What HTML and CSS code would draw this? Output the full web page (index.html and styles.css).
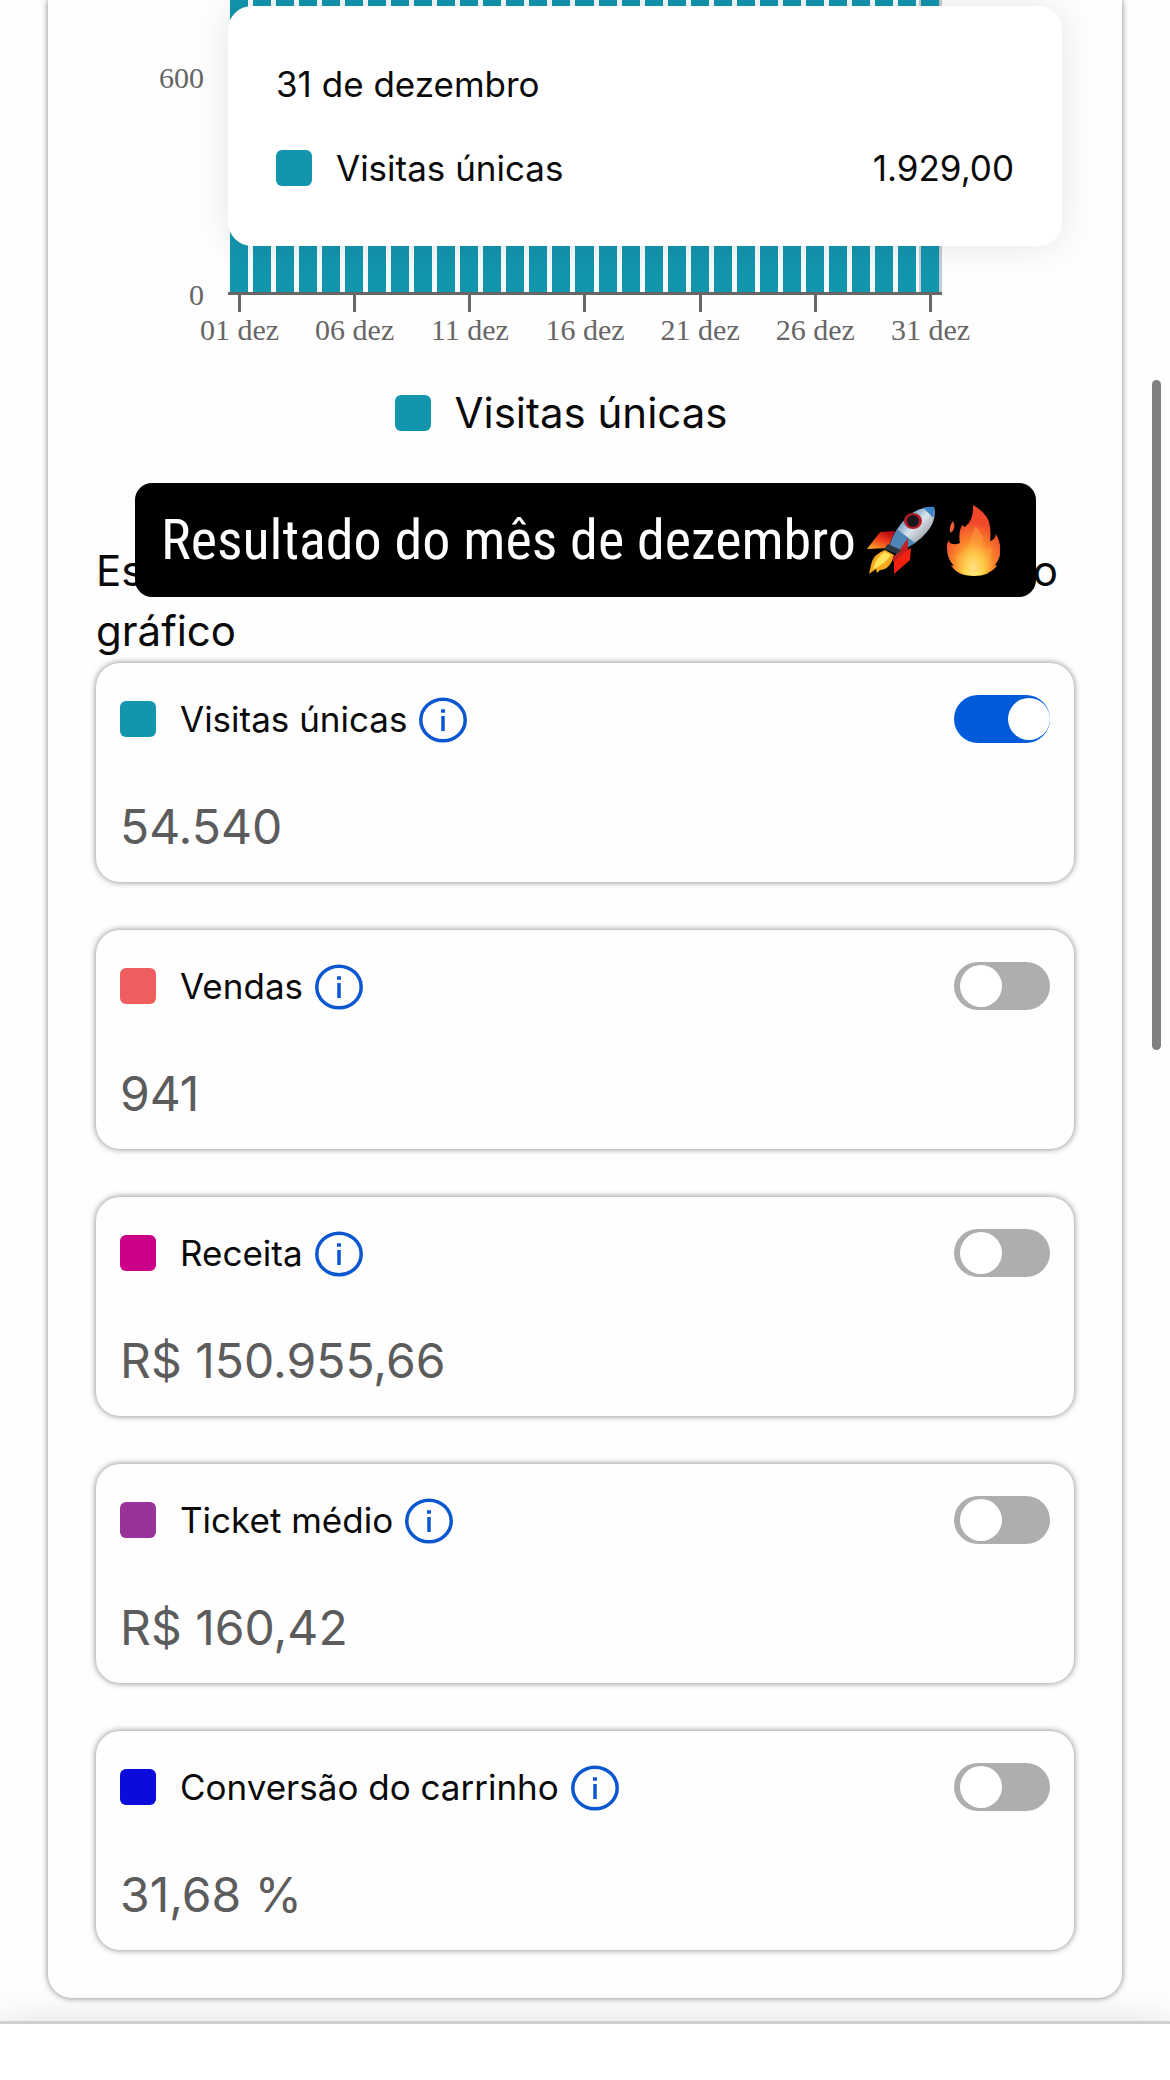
FILE: index.html
```html
<!DOCTYPE html>
<html lang="pt-BR">
<head>
  <meta charset="UTF-8" />
  <title>Estatísticas</title>
  <meta name="viewport" content="width=device-width, initial-scale=1.0" />
  <link rel="stylesheet" href="styles.css">
</head>
<body>
  <main class="painel">
    <div class="grafico">
      <div class="eixo-y">
        <span>600</span>
        <span>0</span>
      </div>
      <div class="area">
        <div class="barras" id="barras"></div>
        <div class="eixo-x" id="eixo-x"></div>
      </div>
      <div class="tooltip">
        <div>31 de dezembro</div>
        <div class="tooltip-linha">
          <span class="cor visitas"></span>
          <span>Visitas únicas</span>
          <span class="tooltip-valor">1.929,00</span>
        </div>
      </div>
    </div>

    <div class="legenda">
      <span class="cor visitas"></span>
      <span>Visitas únicas</span>
    </div>

    <div class="descricao">
      <p>Escolha as informações que deseja visualizar no gráfico</p>
      <div class="faixa">
        <span>Resultado do mês de dezembro</span>
        <svg class="emoji" viewBox="0 0 72 72" aria-hidden="true">
          <defs>
            <linearGradient id="corpo" x1="0" y1="0" x2="1" y2="1">
              <stop offset="0.2" stop-color="#3d7db5" />
              <stop offset="0.5" stop-color="#dbe3ea" />
              <stop offset="0.8" stop-color="#8d979f" />
            </linearGradient>
            <linearGradient id="asa" x1="0" y1="1" x2="0.6" y2="0">
              <stop offset="0" stop-color="#ffb62e" />
              <stop offset="0.6" stop-color="#f03a1a" />
              <stop offset="1" stop-color="#b80d12" />
            </linearGradient>
          </defs>
          <path d="M29 27 L14 28 L1 45 L22 44 Z" fill="url(#asa)" />
          <path d="M45 44 L44 56 L28 70 L28 52 Z" fill="#f0210f" />
          <path d="M19 46 L28 51 Q24 66 14 66 L11 69 L10 65 L3 70 L5 61 Q7 50 19 46 Z" fill="#f6a91c" />
          <path d="M19 48 L25 51 Q18 61 7 65 Q10 53 19 48 Z" fill="#ffe45c" />
          <path d="M68 3 Q53 2 40 14 Q29 25 24 41 L33 47 Q50 41 61 28 Q71 16 68 3 Z" fill="url(#corpo)" />
          <path d="M68 3 Q63 2 57 4 Q62 8 67 14 Q69 8 68 3 Z" fill="#3c86c8" />
          <path d="M31 25 Q26 33 24 41 L33 47 Q42 44 49 39 Z" fill="#4d85b6" />
          <path d="M42 34 L26 56 L28 58 L42 45 Z" fill="#bd1f22" />
          <path d="M22 40 L35 46 L31 50 L18 45 Z" fill="#2b3740" />
          <ellipse cx="47" cy="17" rx="9" ry="8" fill="#b51b2b" />
          <ellipse cx="47" cy="17" rx="6" ry="6" fill="#17171c" />
        </svg>
        <svg class="emoji fogo" viewBox="0 0 56 72" aria-hidden="true">
          <defs>
            <radialGradient id="chama" cx="0.5" cy="0.88" r="0.8">
              <stop offset="0" stop-color="#fffba8" />
              <stop offset="0.22" stop-color="#ffd84a" />
              <stop offset="0.45" stop-color="#fb8b2c" />
              <stop offset="0.8" stop-color="#f0482b" />
            </radialGradient>
          </defs>
          <path d="M27 1 Q43 10 44 23 Q45 31 44 37 Q49 36 50 30 Q55 39 54 47 Q55 53 49 61 L51 62 Q43 72 28 72 Q11 72 5 61 L8 62 Q0 54 1 40 Q4 33 3 38 Q7 42 14 39 Q12 29 16 21 L19 23 Q28 16 27 1 Z" fill="url(#chama)" />
          <path d="M29 22 Q39 29 36 44 Q42 47 45 43 Q47 63 28 69 Q9 65 10 50 Q17 54 21 43 Q25 36 29 22 Z" fill="#ffb347" opacity="0.35" />
          <path d="M7 17 Q11 25 4 29 Q3 22 7 17 Z" fill="#ef5a38" />
        </svg>
      </div>
    </div>

    <div class="lista" id="lista"></div>
  </main>

  <footer class="rodape"></footer>
  <div class="rolagem"></div>

  <script>
    const metricas = [
      { nome: "Visitas únicas", valor: "54.540", classe: "visitas", ativa: true },
      { nome: "Vendas", valor: "941", classe: "vendas" },
      { nome: "Receita", valor: "R$ 150.955,66", classe: "receita" },
      { nome: "Ticket médio", valor: "R$ 160,42", classe: "ticket" },
      { nome: "Conversão do carrinho", valor: "31,68 %", classe: "conversao" }
    ];

    // um dia por coluna, rótulo a cada 5 dias
    function montarGrafico() {
      const barras = document.getElementById("barras");
      const eixo = document.getElementById("eixo-x");
      for (let dia = 1; dia <= 31; dia++) {
        const texto = String(dia).padStart(2, "0") + " dez";
        barras.innerHTML += `<div class="coluna"></div>`;
        eixo.innerHTML += (dia - 1) % 5 === 0
          ? `<div class="marca"><span>${texto}</span></div>`
          : `<div></div>`;
      }
    }

    function montarLista() {
      document.getElementById("lista").innerHTML = metricas.map((m) => `
        <section class="cartao">
          <div class="cartao-topo">
            <span class="cor ${m.classe}"></span>
            <label for="chave-${m.classe}">${m.nome}</label>
            <button class="info" type="button" aria-label="Informações">
              <svg viewBox="0 0 48 48" aria-hidden="true">
                <ellipse cx="24" cy="25" rx="22.2" ry="20.8" />
                <path d="M24 21 V36" />
                <path d="M22 16 H26" />
              </svg>
            </button>
            <input class="chave" type="checkbox" id="chave-${m.classe}" ${m.ativa ? "checked" : ""}>
          </div>
          <div class="valor">${m.valor}</div>
        </section>`).join("");
    }

    montarGrafico();
    montarLista();
  </script>
</body>
</html>
```
FILE: styles.css
```css
* {
  box-sizing: border-box;
}

body {
  font-family: Inter, "Liberation Sans", sans-serif;
  background: #fefefe;
  color: #0a0a0a;
  margin: 0;
  min-height: 100vh;
  display: flex;
  flex-direction: column;
  position: relative;
}

.painel {
  margin: 0 48px;
  padding: 0 48px 48px;
  border-radius: 0 0 24px 24px;
  box-shadow: 0 0 6px rgba(0,0,0,0.5);
}

/* grafico */
.grafico {
  position: relative;
  display: flex;
  padding-right: 132px;
}

.eixo-y {
  width: 132px;
  height: 313px;
  padding: 60px 24px 0 0;
  display: flex;
  flex-direction: column;
  justify-content: space-between;
  text-align: right;
}

.eixo-y,
.eixo-x {
  font-family: "Liberation Serif", serif;
  font-size: 30px;
  line-height: 36px;
  color: #666;
}

.area {
  flex: 1;
}

.barras {
  display: flex;
  height: 295px;
  border-bottom: 3px solid #666;
}

.coluna {
  flex: 1;
  background: #1395ae;
  border: 0 solid #f6fbfd;
  border-width: 0 3px 0 2px;
}

.coluna:last-child {
  border-color: #c3ccd0;
}

.eixo-x {
  display: flex;
  height: 56px;
}

.eixo-x div {
  flex: 1 0 0;
  min-width: 0;
}

.marca {
  display: flex;
  flex-direction: column;
  align-items: center;
  white-space: nowrap;
}

.marca::before {
  content: "";
  width: 3px;
  height: 17px;
  background: #666;
}

.tooltip {
  position: absolute;
  top: 6px;
  left: 132px;
  right: 12px;
  padding: 54px 48px;
  display: flex;
  flex-direction: column;
  gap: 36px;
  background: #fff;
  border-radius: 24px;
  box-shadow: 0 0 36px rgba(0,0,0,0.1);
  font-size: 35px;
  line-height: 48px;
}

.tooltip-linha {
  display: flex;
  align-items: center;
}

.tooltip-valor {
  margin-left: auto;
}

.cor {
  width: 36px;
  height: 36px;
  margin-right: 24px;
  border-radius: 6px;
}

.visitas { background: #1395ae; }
.vendas { background: #ef5e5e; }
.receita { background: #cc0088; }
.ticket { background: #993399; }
.conversao { background: #0b0bdc; }

.legenda {
  display: flex;
  align-items: center;
  justify-content: center;
  margin-top: 32px;
  padding-right: 48px;
  font-size: 42px;
  line-height: 60px;
}

.descricao {
  position: relative;
  margin-top: 98px;
  padding-bottom: 2px;
  font-size: 42px;
  line-height: 60px;
}

.descricao p {
  margin: 0;
}

.faixa {
  position: absolute;
  top: -58px;
  left: 39px;
  right: 38px;
  height: 114px;
  padding: 0 26px;
  display: flex;
  align-items: center;
  background: #000;
  color: #fff;
  border-radius: 17px;
  font-family: "Liberation Sans Narrow", "Roboto Condensed", Roboto, sans-serif;
  font-size: 56px;
  white-space: nowrap;
}

.emoji {
  flex: none;
  width: 72px;
  height: 72px;
  margin-left: 10px;
}

.fogo {
  width: 56px;
  margin-left: 8px;
}

/* metricas */
.lista {
  display: flex;
  flex-direction: column;
  gap: 48px;
}

.cartao {
  padding: 32px 24px 25px;
  border-radius: 24px;
  box-shadow: 0 0 6px rgba(0,0,0,0.5);
}

.cartao-topo {
  display: flex;
  align-items: center;
  font-size: 35px;
  line-height: 48px;
}

.info {
  width: 48px;
  height: 48px;
  margin-left: 12px;
  padding: 0;
  border: none;
  background: none;
  cursor: pointer;
}

.info svg {
  display: block;
  fill: none;
  stroke: #0a57d0;
  stroke-width: 3.5;
}

.chave {
  appearance: none;
  width: 96px;
  height: 48px;
  margin: 0 0 0 auto;
  padding: 3px 6px;
  border-radius: 24px;
  background: #aeaeae;
  cursor: pointer;
}

.chave::before {
  content: "";
  display: block;
  width: 42px;
  height: 42px;
  border-radius: 50%;
  background: #fff;
}

.chave:checked {
  padding-right: 0;
  background: #005bdb;
}

.chave:checked::before {
  margin-left: auto;
}

.valor {
  margin-top: 54px;
  font-size: 48px;
  line-height: 60px;
  color: #5c5c5c;
}

.rodape {
  flex: 1;
  margin-top: 23px;
  border-top: 3px solid #d0d0d0;
  background: #fff;
  box-shadow: 0 0 36px rgba(0,0,0,0.12);
}

.rolagem {
  position: absolute;
  top: 380px;
  right: 9px;
  width: 9px;
  height: 670px;
  border-radius: 5px;
  background: #808080;
}
```
